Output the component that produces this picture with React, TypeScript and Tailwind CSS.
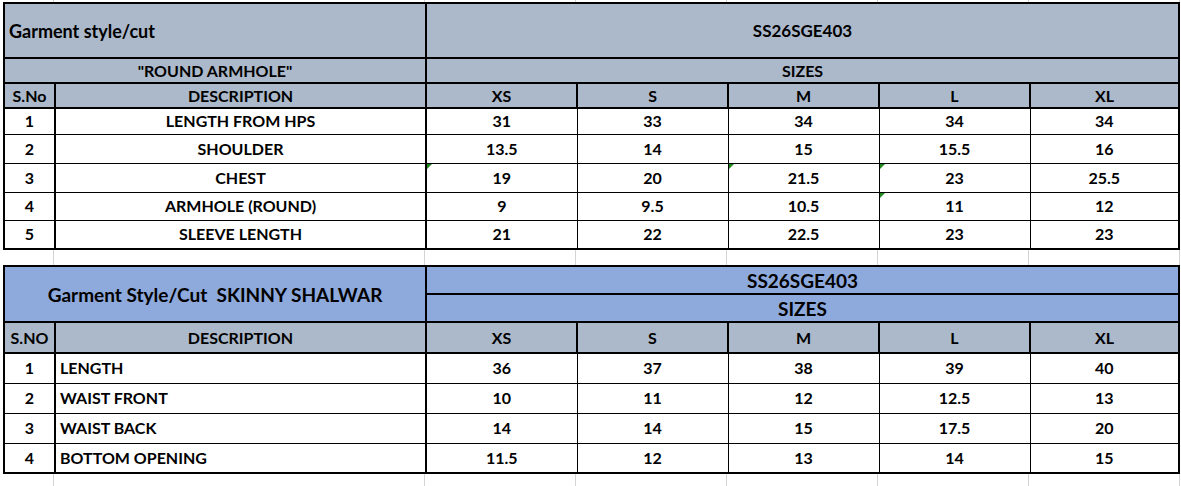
const SIZES = ["XS", "S", "M", "L", "XL"];

const TOP_ROWS = [
  { no: "1", desc: "LENGTH FROM HPS", vals: ["31", "33", "34", "34", "34"], h: "h-[26px]" },
  { no: "2", desc: "SHOULDER", vals: ["13.5", "14", "15", "15.5", "16"], h: "h-[29px]" },
  { no: "3", desc: "CHEST", vals: ["19", "20", "21.5", "23", "25.5"], h: "h-[29px]", flags: [0, 2, 3] },
  { no: "4", desc: "ARMHOLE (ROUND)", vals: ["9", "9.5", "10.5", "11", "12"], h: "h-[28px]", flags: [3] },
  { no: "5", desc: "SLEEVE LENGTH", vals: ["21", "22", "22.5", "23", "23"], h: "h-[29px]" },
];

const BOTTOM_ROWS = [
  { no: "1", desc: "LENGTH", vals: ["36", "37", "38", "39", "40"] },
  { no: "2", desc: "WAIST FRONT", vals: ["10", "11", "12", "12.5", "13"] },
  { no: "3", desc: "WAIST BACK", vals: ["14", "14", "15", "17.5", "20"] },
  { no: "4", desc: "BOTTOM OPENING", vals: ["11.5", "12", "13", "14", "15"] },
];

// excel's little green "number stored as text" marker
const Flag = () => (
  <span className="absolute left-0 top-0 w-0 h-0 border-t-[5px] border-r-[5px] border-t-[#1e8a1e] border-r-transparent" />
);

const Cols = () => (
  <colgroup>
    <col className="w-[51px]" />
    <col className="w-[371px]" />
    <col className="w-[151px]" />
    <col className="w-[151px]" />
    <col className="w-[151px]" />
    <col className="w-[151px]" />
    <col className="w-[149px]" />
  </colgroup>
);

// light excel gridlines between the tables
const Gridlines = ({ h }: { h: string }) => (
  <div className={`flex ${h} ml-[3px]`}>
    {[51, 371, 151, 151, 151, 151, 151].map((w, i) => (
      <div key={i} className="border-r border-[#d4d4d4] shrink-0" style={{ width: w }} />
    ))}
  </div>
);

const th = "border-2 border-black bg-[#acb9ca] text-center align-middle";
const td = "border border-black text-center align-middle";

export default function App() {
  return (
    <div className="w-[1181px] h-[486px] overflow-hidden bg-white text-black font-bold text-[16px] leading-none font-['Lato','Liberation_Sans',sans-serif]">
      <Gridlines h="h-[2px]" />

      <table className="table-fixed border-collapse ml-[3px] w-[1175px]">
        <Cols />
        <tbody>
          <tr className="h-[55px]">
            <td colSpan={2} className={`${th} !text-left pl-1 text-[18px]`}>Garment style/cut</td>
            <td colSpan={5} className={`${th} text-[17px]`}>SS26SGE403</td>
          </tr>
          <tr className="h-[25px]">
            <td colSpan={2} className={th}>"ROUND ARMHOLE"</td>
            <td colSpan={5} className={th}>SIZES</td>
          </tr>
          <tr className="h-[25px]">
            <td className={th}>S.No</td>
            <td className={th}>DESCRIPTION</td>
            {SIZES.map((s) => (
              <td key={s} className={th}>{s}</td>
            ))}
          </tr>
          {TOP_ROWS.map((r, ri) => {
            const last = ri === TOP_ROWS.length - 1;
            return (
              <tr key={r.no} className={r.h}>
                <td className={`${td} border-l-2 border-r-2 ${last ? "border-b-2" : ""}`}>{r.no}</td>
                <td className={`${td} border-r-2 ${last ? "border-b-2" : ""}`}>{r.desc}</td>
                {r.vals.map((v, i) => (
                  <td
                    key={i}
                    className={`${td} relative ${i === 4 ? "border-r-2" : ""} ${last ? "border-b-2" : ""}`}
                  >
                    {r.flags?.includes(i) && <Flag />}
                    {v}
                  </td>
                ))}
              </tr>
            );
          })}
        </tbody>
      </table>

      <Gridlines h="h-[15px]" />

      <table className="table-fixed border-collapse ml-[3px] w-[1175px]">
        <Cols />
        <tbody>
          <tr className="h-[28px]">
            <td rowSpan={2} colSpan={2} className={`${th} !bg-[#8ea9db] text-[19px]`}>
              Garment Style/Cut&nbsp;&nbsp;SKINNY SHALWAR
            </td>
            <td colSpan={5} className={`${th} !bg-[#8ea9db] text-[19px]`}>SS26SGE403</td>
          </tr>
          <tr className="h-[28px]">
            <td colSpan={5} className={`${th} !bg-[#8ea9db] text-[19px]`}>SIZES</td>
          </tr>
          <tr className="h-[31px]">
            <td className={th}>S.NO</td>
            <td className={th}>DESCRIPTION</td>
            {SIZES.map((s) => (
              <td key={s} className={th}>{s}</td>
            ))}
          </tr>
          {BOTTOM_ROWS.map((r, ri) => {
            const last = ri === BOTTOM_ROWS.length - 1;
            return (
              <tr key={r.no} className="h-[30px]">
                <td className={`${td} border-l-2 border-r-2 ${last ? "border-b-2" : ""}`}>{r.no}</td>
                <td className={`${td} !text-left pl-[4px] border-r-2 ${last ? "border-b-2" : ""}`}>{r.desc}</td>
                {r.vals.map((v, i) => (
                  <td key={i} className={`${td} ${i === 4 ? "border-r-2" : ""} ${last ? "border-b-2" : ""}`}>
                    {v}
                  </td>
                ))}
              </tr>
            );
          })}
        </tbody>
      </table>

      <Gridlines h="h-[20px]" />
    </div>
  );
}
